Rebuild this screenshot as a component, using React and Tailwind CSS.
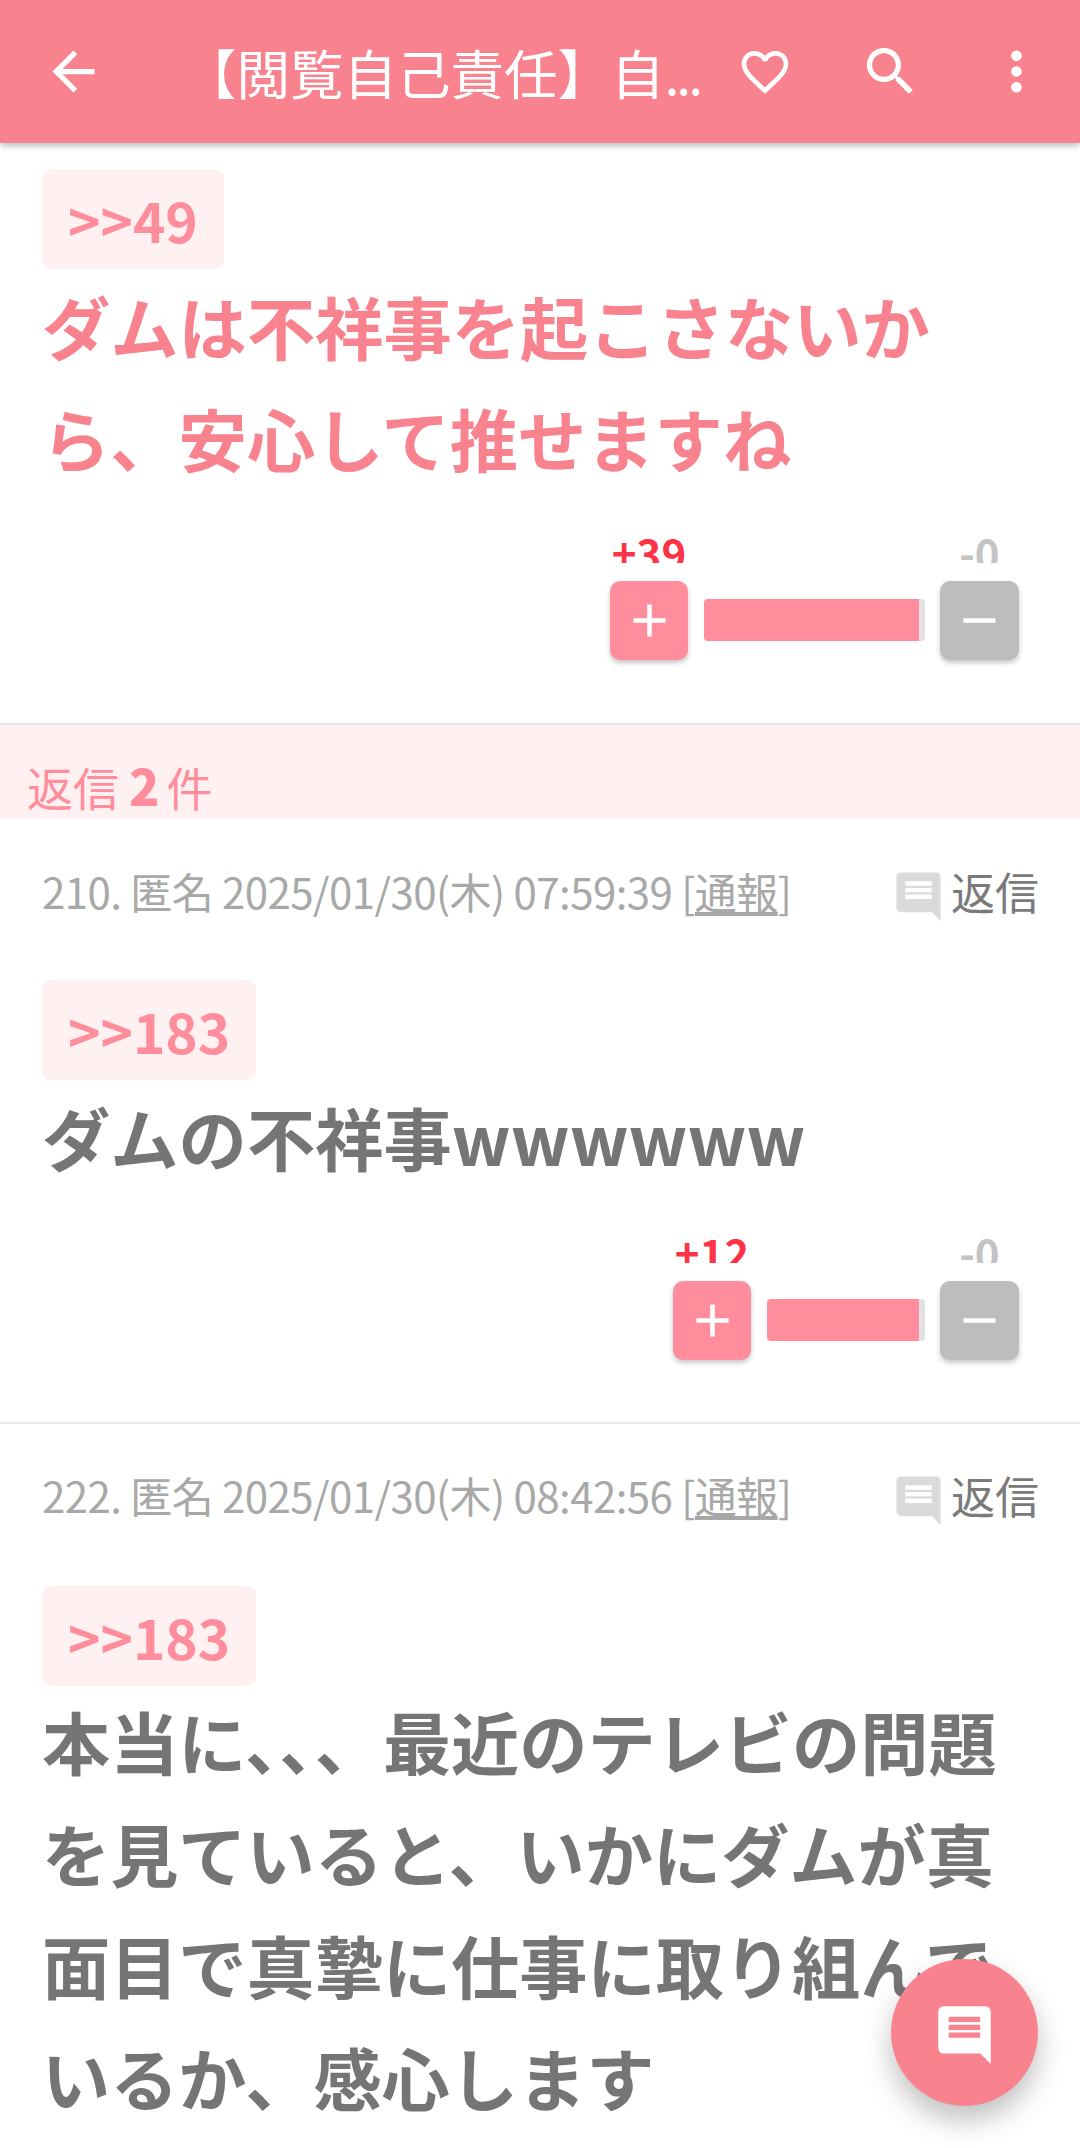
import React from 'react';
import { MdArrowBack, MdFavoriteBorder, MdSearch, MdMoreVert, MdAdd, MdRemove } from 'react-icons/md';

const FONT = "font-['Noto_Sans_CJK_JP','Noto_Sans',sans-serif]";

const BubbleIcon = ({ className, lines }) => (
  <svg viewBox="0 0 24 24" className={className}>
    <path fill="currentColor" d="M2 4a2 2 0 0 1 2-2h16a2 2 0 0 1 2 2v20l-4-4H4a2 2 0 0 1-2-2z" />
    <path fill={lines} d="M6 6h12v2H6zM6 9h12v2H6zM6 12h12v2H6z" />
  </svg>
);

const Votes = ({ up, barWidth, upWidth }) => (
  <div className="flex justify-end items-end pr-[61px]">
    <div className="flex flex-col items-center w-[78px]">
      <div className="h-[29px] overflow-hidden text-[42px] leading-[36px] font-bold text-[#ff3347] whitespace-nowrap">{up}</div>
      <div className="mt-[18px] w-[78px] h-[79px] rounded-[10px] bg-[#ff8d9b] flex items-center justify-center shadow-[0_3px_5px_rgba(0,0,0,0.22)]">
        <MdAdd className="w-[55px] h-[55px] text-white" />
      </div>
    </div>
    <div className={`${barWidth} h-[42px] ml-[16px] mr-[15px] mb-[19px] rounded-[4px] bg-[#e2e2e2] overflow-hidden`}>
      <div className={`${upWidth} h-full bg-[#ff8d9b]`} />
    </div>
    <div className="flex flex-col items-center w-[79px]">
      <div className="h-[29px] overflow-hidden text-[42px] leading-[36px] font-bold text-[#c4c4c4]">-0</div>
      <div className="mt-[18px] w-[79px] h-[79px] rounded-[10px] bg-[#bdbdbd] flex items-center justify-center shadow-[0_3px_5px_rgba(0,0,0,0.22)]">
        <MdRemove className="w-[55px] h-[55px] text-white" />
      </div>
    </div>
  </div>
);

const PostMeta = ({ text }) => (
  <div className="flex items-center justify-between pl-[42px] pr-[41px] h-[60px]">
    <div className="text-[42px] leading-[60px] tracking-[-0.55px] text-[#a8a8a8] whitespace-nowrap">
      {text} [<span className="underline">通報</span>]
    </div>
    <div className="flex items-center">
      <BubbleIcon className="w-[53px] h-[53px] text-[#dadada] mt-[6px]" lines="#ffffff" />
      <span className="ml-[6px] text-[44px] leading-[60px] text-[#7a7a7a]">返信</span>
    </div>
  </div>
);

const Chip = ({ children }) => (
  <div className="ml-[42px] inline-flex items-center h-[100px] px-[26px] rounded-[10px] bg-[#fff0f1] text-[55px] font-bold text-[#ff8d9b]">
    {children}
  </div>
);

export default function App() {
  return (
    <div className={`${FONT} relative w-[1080px] h-[2148px] overflow-hidden bg-white`}>
      <header className="relative z-10 h-[143px] bg-[#f8838e] flex items-center text-white shadow-[0_3px_6px_rgba(0,0,0,0.25)]">
        <MdArrowBack className="ml-[42px] w-[63px] h-[63px] shrink-0" />
        <div className="ml-[78px] flex-1 text-[53.5px] leading-[72px] whitespace-nowrap">
          【閲覧自己責任】自<span className="tracking-[-3px]">...</span>
        </div>
        <div className="flex items-center pr-[32px]">
          <MdFavoriteBorder className="w-[56px] h-[56px] mr-[66px]" />
          <MdSearch className="w-[63px] h-[63px] mr-[63px]" />
          <MdMoreVert className="w-[63px] h-[63px]" />
        </div>
      </header>

      <section className="pt-[26px] h-[582px] border-b-2 border-[#e8e8e8]">
        <Chip>&gt;&gt;49</Chip>
        <div className="ml-[42px] mr-[120px] mt-[1px] text-[68.3px] leading-[112px] font-bold text-[#f8838e]">
          ダムは不祥事を起こさないから、安心して推せますね
        </div>
        <div className="mt-[40px]">
          <Votes up="+39" barWidth="w-[221px]" upWidth="w-[215px]" />
        </div>
      </section>

      <div className="h-[94px] bg-[#fff0f1] flex items-end pl-[27px] text-[46px] leading-[66px] text-[#ff8d9b]">
        <span>返信<b className="ml-[10px] mr-[7px] text-[50px] font-black">2</b>件</span>
      </div>

      <section className="pt-[42px] h-[605px] border-b-2 border-[#e8e8e8]">
        <PostMeta text="210. 匿名 2025/01/30(木) 07:59:39" />
        <div className="mt-[59px]"><Chip>&gt;&gt;183</Chip></div>
        <div className="ml-[42px] mt-[1px] text-[68.3px] leading-[112px] font-bold text-[#757575]">
          ダムの不祥事wwwwww
        </div>
        <div className="mt-[41px]">
          <Votes up="+12" barWidth="w-[158px]" upWidth="w-[152px]" />
        </div>
      </section>

      <section className="pt-[41px]">
        <PostMeta text="222. 匿名 2025/01/30(木) 08:42:56" />
        <div className="mt-[61px]"><Chip>&gt;&gt;183</Chip></div>
        <div className="ml-[42px] mr-[60px] mt-[-1px] text-[68.2px] leading-[112px] font-bold text-[#757575]">
          本当に､､、最近のテレビの問題を見ていると、いかにダムが真面目で真摯に仕事に取り組んでいるか、感心します
        </div>
      </section>

      <button className="absolute right-[42px] bottom-[42px] w-[147px] h-[147px] rounded-full bg-[#f8838e] flex items-center justify-center shadow-[0_14px_28px_rgba(0,0,0,0.25)]">
        <BubbleIcon className="w-[63px] h-[63px] text-white" lines="#f8838e" />
      </button>
    </div>
  );
}
